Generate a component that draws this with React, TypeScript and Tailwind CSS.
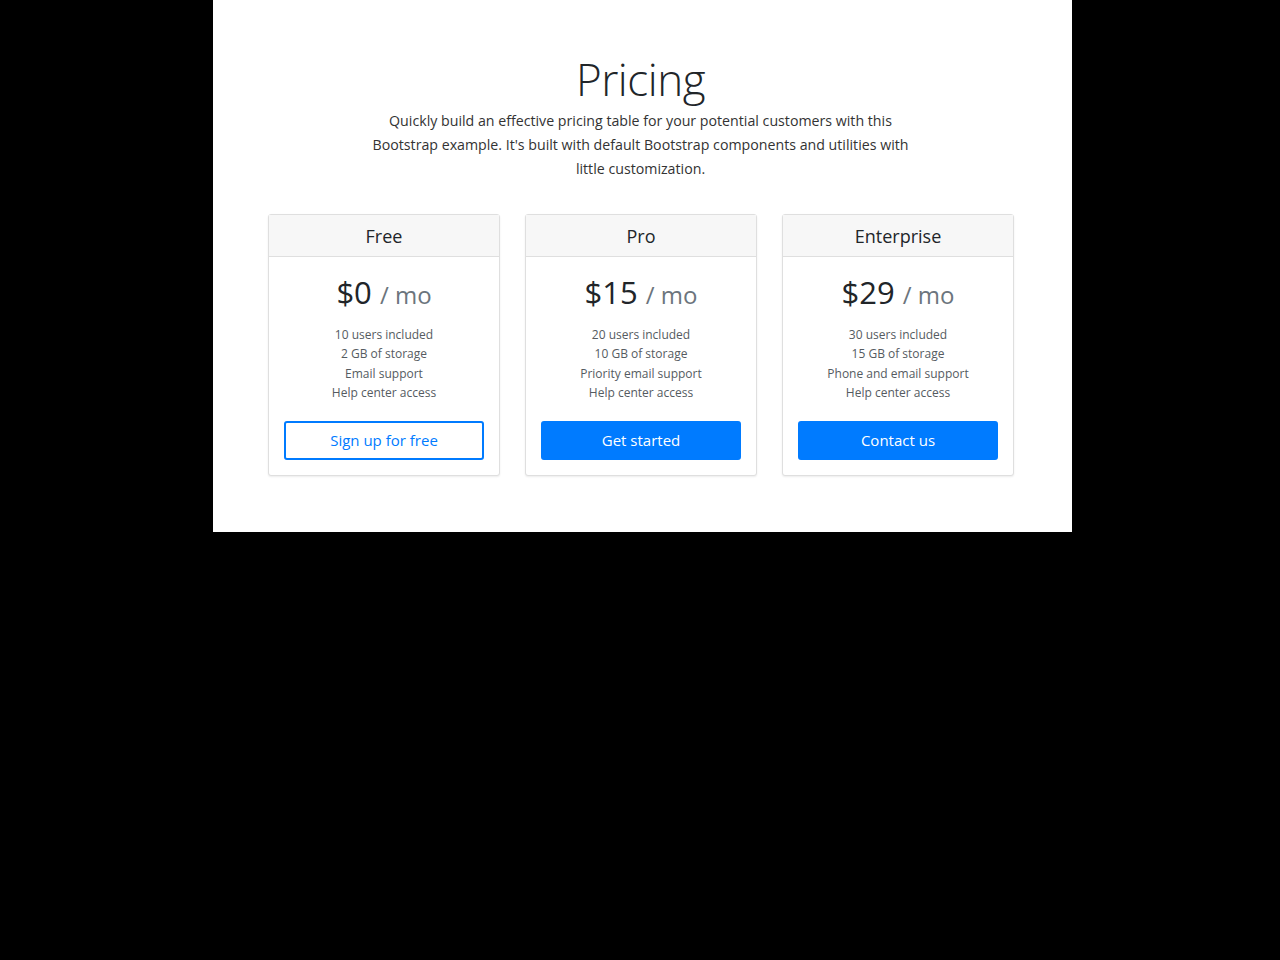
const plans = [
  {
    name: "Free",
    price: "$0",
    features: ["10 users included", "2 GB of storage", "Email support", "Help center access"],
    cta: "Sign up for free",
    outline: true,
  },
  {
    name: "Pro",
    price: "$15",
    features: ["20 users included", "10 GB of storage", "Priority email support", "Help center access"],
    cta: "Get started",
    outline: false,
  },
  {
    name: "Enterprise",
    price: "$29",
    features: ["30 users included", "15 GB of storage", "Phone and email support", "Help center access"],
    cta: "Contact us",
    outline: false,
  },
];

export default function App() {
  return (
    <div className="min-h-[960px] bg-black" style={{ fontFamily: '"Open Sans", "Noto Sans", sans-serif' }}>
      <div className="ml-[213px] w-[859px] bg-white pt-[52px] pb-[56px] text-[#212529]">
        <div className="mx-auto w-[560px] -translate-x-[2px] text-center">
          <h1 className="text-[44px] font-light leading-[54px] tracking-[-0.5px]">Pricing</h1>
          <p className="mt-[3px] text-[14.2px] leading-[24px] text-[#333]">
            Quickly build an effective pricing table for your potential customers with this Bootstrap example. It's
            built with default Bootstrap components and utilities with little customization.
          </p>
        </div>
        <div className="mt-[33px] flex justify-center gap-[25px] pr-[3px]">
          {plans.map((p) => (
            <div
              key={p.name}
              className="w-[232px] rounded-[3px] border border-[#dfdfdf] bg-white text-center shadow-[0_1px_2px_rgba(0,0,0,0.08)]"
            >
              <div className="h-[42px] border-b border-[#dfdfdf] bg-[#f7f7f7] text-[18px] leading-[42px] text-[#212529]">
                {p.name}
              </div>
              <div className="px-[15px] pt-[16px] pb-[15px]">
                <div className="text-[31px] font-medium leading-[38px]">
                  {p.price} <span className="text-[24px] font-normal text-[#6c757d]">/ mo</span>
                </div>
                <ul className="mt-[11px] text-[12px] leading-[19.3px] text-[#555b61]">
                  {p.features.map((f) => (
                    <li key={f}>{f}</li>
                  ))}
                </ul>
                <button
                  className={`mt-[19px] h-[39px] w-full rounded-[3px] border-2 text-[15px] ${
                    p.outline
                      ? "border-[#007bff] bg-white text-[#007bff]"
                      : "border-[#007bff] bg-[#007bff] text-white"
                  }`}
                >
                  {p.cta}
                </button>
              </div>
            </div>
          ))}
        </div>
      </div>
    </div>
  );
}
